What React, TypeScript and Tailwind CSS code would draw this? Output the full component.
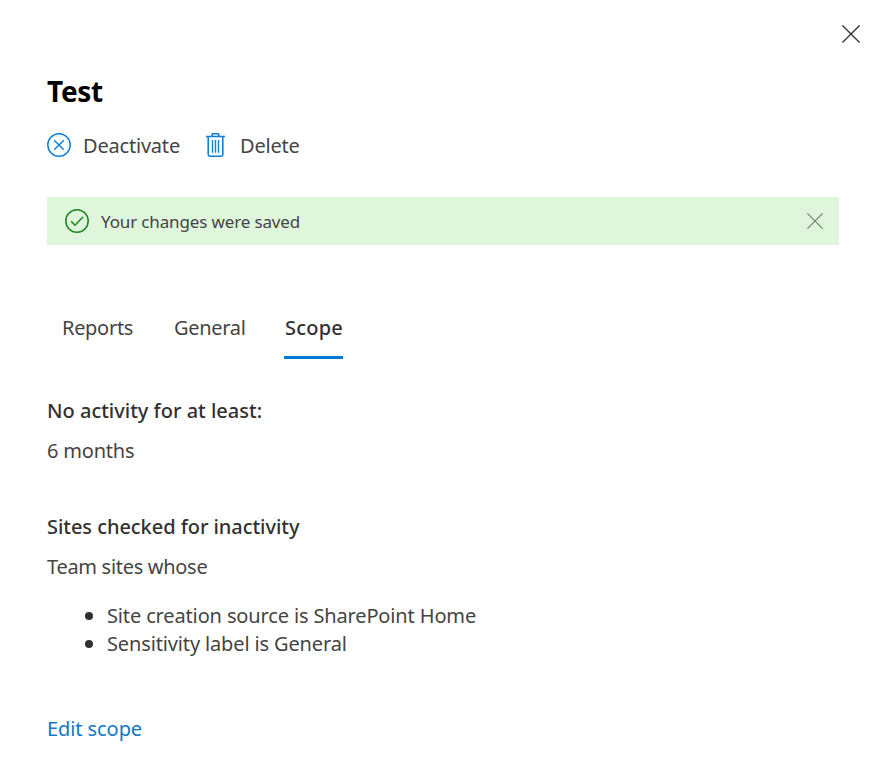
import React from "react";

function CloseIcon({ size, className }: { size: number; className: string }) {
  return (
    <svg width={size} height={size} viewBox="0 0 18 18" className={className} fill="none" stroke="currentColor" strokeWidth="1.3">
      <path d="M0.4 0.4 17.6 17.6M17.6 0.4 0.4 17.6" />
    </svg>
  );
}

function DeactivateIcon() {
  return (
    <svg width="24" height="24" viewBox="0 0 24 24" fill="none" stroke="#0f80d8" strokeWidth="1.5">
      <circle cx="12" cy="12" r="11.2" />
      <path d="m7.2 7.2 9.6 9.6M16.8 7.2l-9.6 9.6" />
    </svg>
  );
}

function TrashIcon() {
  return (
    <svg width="19" height="24" viewBox="0 0 19 24" fill="none" stroke="#0f80d8" strokeWidth="1.6">
      <path d="M0 3.5h19M6.2 3.5V1.6a.9.9 0 0 1 .9-.9h4.8a.9.9 0 0 1 .9.9v1.9M2.2 3.5v18.1a1.6 1.6 0 0 0 1.6 1.6h11.4a1.6 1.6 0 0 0 1.6-1.6V3.5" />
      <path strokeWidth="1.4" d="M6.5 7v12.7M9.5 7v12.7M12.5 7v12.7" />
    </svg>
  );
}

function SuccessIcon() {
  return (
    <svg width="24" height="24" viewBox="0 0 24 24" fill="none" stroke="#1a871a" strokeWidth="1.5">
      <circle cx="12" cy="12" r="11.2" />
      <path d="m6.2 12.4 3.8 3.8 8.1-8.4" />
    </svg>
  );
}

export default function App() {
  return (
    <main className="flex h-[784px] w-[882px] flex-col bg-white pl-[47px] font-['Noto_Sans','Open_Sans',sans-serif] text-[20px] leading-[28px] whitespace-nowrap text-[#454443]">
      <div className="flex h-[73px] justify-end pt-[25px] pr-[22px]">
        <button aria-label="Close" className="h-[18px]">
          <CloseIcon size={18} className="text-[#323130]" />
        </button>
      </div>
      <h1 className="h-[36px] text-[28px] leading-[36px] font-bold tracking-[-0.3px] text-black">Test</h1>
      <div className="mt-[22px] flex h-[28px] items-center">
        <button className="flex w-[159px] items-center gap-[12px]">
          <DeactivateIcon />
          <span className="mt-[2px] tracking-[-0.2px]">Deactivate</span>
        </button>
        <button className="flex items-center gap-[15px]">
          <TrashIcon />
          <span className="mt-[2px] tracking-[-0.2px]">Delete</span>
        </button>
      </div>
      <div className="mt-[38px] flex h-[48px] w-[792px] items-center bg-[#dff6dd] pr-[16px] pl-[18px]">
        <SuccessIcon />
        <span className="mt-px ml-[12px] text-[17px] tracking-[-0.14px]">Your changes were saved</span>
        <button aria-label="Dismiss" className="ml-auto">
          <CloseIcon size={16} className="text-[#6d7f6b]" />
        </button>
      </div>
      <nav className="mt-[69px] flex h-[45px]">
        <button className="flex w-[112px] items-start pl-[15px] tracking-[-0.3px]">Reports</button>
        <button className="flex w-[125px] items-start pl-[15px] tracking-[-0.3px]">General</button>
        <button className="flex w-[59px] items-start border-b-3 border-[#0078d4] pl-px font-medium tracking-[0.2px] text-[#323130]">Scope</button>
      </nav>
      <h2 className="mt-[38px] font-medium text-[#323130]">No activity for at least:</h2>
      <p className="mt-[12px] tracking-[-0.2px]">6 months</p>
      <h2 className="mt-[48px] font-medium tracking-[-0.05px] text-[#323130]">Sites checked for inactivity</h2>
      <p className="mt-[12px] tracking-[-0.3px]">Team sites whose</p>
      <ul className="mt-[21px] pl-[38px]">
        <li className="flex items-center gap-[14px]">
          <span className="size-[8px] rounded-full bg-[#323130]" />
          <span className="tracking-[-0.14px]">Site creation source is SharePoint Home</span>
        </li>
        <li className="flex items-center gap-[14px]">
          <span className="size-[8px] rounded-full bg-[#323130]" />
          <span className="tracking-[-0.14px]">Sensitivity label is General</span>
        </li>
      </ul>
      <a className="mt-[57px] tracking-[-0.08px] text-[#1278c6]">Edit scope</a>
    </main>
  );
}
